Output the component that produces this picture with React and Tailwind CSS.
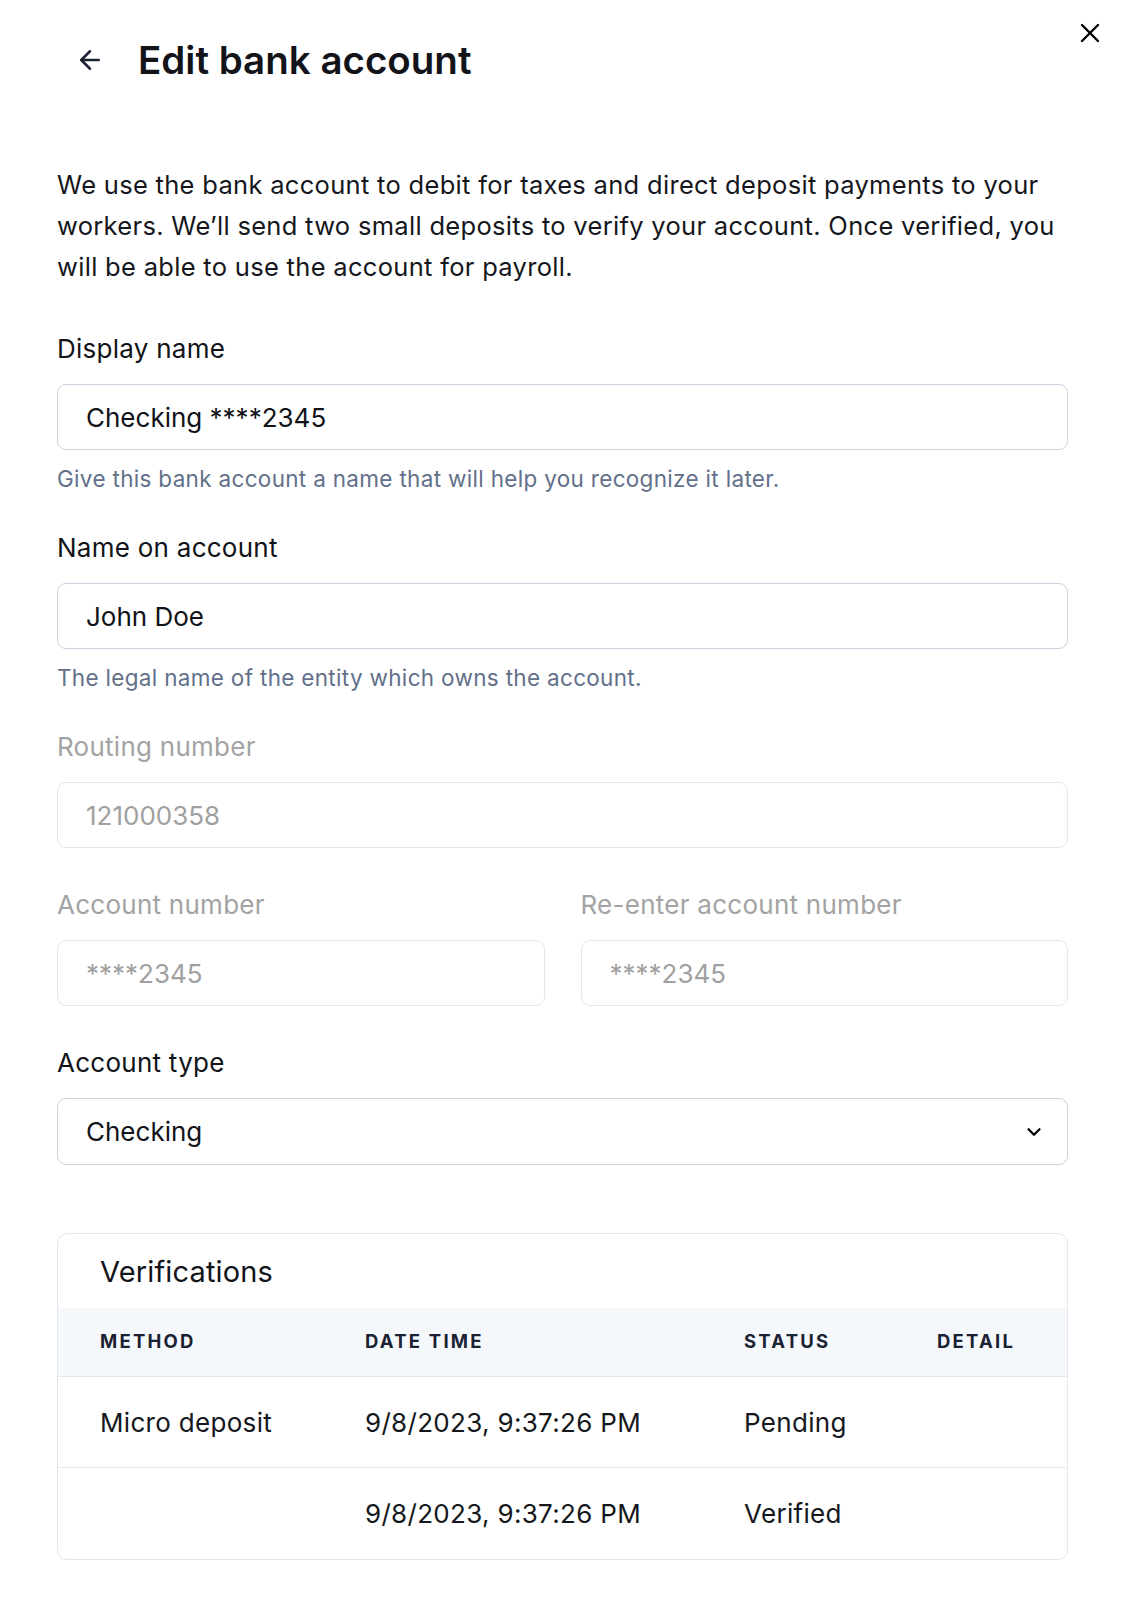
import { ArrowLeft, X, ChevronDown } from "lucide-react";

const ROWS = [
  { method: "Micro deposit", date: "9/8/2023, 9:37:26 PM", status: "Pending" },
  { method: "", date: "9/8/2023, 9:37:26 PM", status: "Verified" },
];

function Field({ label, value, hint, disabled, className = "" }) {
  return (
    <div className={className}>
      <label
        className={`block text-[26px] leading-[34px] tracking-[0.01em] ${
          disabled ? "text-[#a3a3a3]" : "text-[#111318]"
        }`}
      >
        {label}
      </label>
      <div
        className={`mt-[18px] h-[66px] rounded-[9px] border px-[28px] flex items-center text-[26px] ${
          disabled
            ? "border-[#e3e8ef] text-[#a0a0a0]"
            : "border-[#c9d3e0] text-[#111318]"
        }`}
      >
        {value}
      </div>
      {hint && (
        <p className="mt-[14px] text-[22.5px] leading-[30px] tracking-[0.014em] text-[#62708a]">
          {hint}
        </p>
      )}
    </div>
  );
}

export default function App() {
  return (
    <div
      className="relative min-h-screen bg-white px-[57px] pt-[38px] pb-[40px]"
      style={{ fontFamily: "Inter, 'Noto Sans', sans-serif" }}
    >
      <button className="absolute right-[23px] top-[17px] text-black">
        <X size={32} strokeWidth={1.8} />
      </button>

      <div className="flex items-center h-[44px]">
        <ArrowLeft size={30} strokeWidth={2} className="ml-[18px] text-[#1b2333]" />
        <h1 className="ml-[33px] text-[38.5px] leading-[44px] font-semibold text-[#12141a]">
          Edit bank account
        </h1>
      </div>

      <p className="mt-[82px] text-[25.5px] leading-[41px] tracking-[0.012em] text-[#15171c] w-[1011px]">
        We use the bank account to debit for taxes and direct deposit payments
        to your workers. We’ll send two small deposits to verify your account.
        Once verified, you will be able to use the account for payroll.
      </p>

      <div className="w-[1011px]">
        <Field
          className="mt-[45px]"
          label="Display name"
          value="Checking ****2345"
          hint="Give this bank account a name that will help you recognize it later."
        />
        <Field
          className="mt-[37px]"
          label="Name on account"
          value="John Doe"
          hint="The legal name of the entity which owns the account."
        />
        <Field
          className="mt-[37px]"
          label="Routing number"
          value="121000358"
          disabled
        />
        <div className="mt-[40px] grid grid-cols-2 gap-[36px]">
          <Field label="Account number" value="****2345" disabled />
          <Field label="Re-enter account number" value="****2345" disabled />
        </div>

        <div className="mt-[40px]">
          <label className="block text-[26px] leading-[34px] tracking-[0.01em] text-[#111318]">
            Account type
          </label>
          <div className="mt-[18px] h-[67px] rounded-[9px] border border-[#c9d3e0] pl-[28px] pr-[22px] flex items-center justify-between text-[26px] text-[#111318]">
            <span>Checking</span>
            <ChevronDown size={22} strokeWidth={2.5} className="text-black" />
          </div>
        </div>

        <div className="mt-[68px] rounded-[10px] border border-[#e3e8ef] overflow-hidden">
          <h2 className="px-[42px] pt-[20px] pb-[18px] text-[29px] leading-[36px] tracking-[0.005em] text-[#12141a]">
            Verifications
          </h2>
          <div className="grid grid-cols-[265px_379px_193px_1fr] px-[42px] h-[69px] items-center bg-[#f5f8fb] border-b border-[#e3e8ef] text-[18.5px] font-bold tracking-[0.12em] text-[#1b2333]">
            <span>METHOD</span>
            <span>DATE TIME</span>
            <span>STATUS</span>
            <span>DETAIL</span>
          </div>
          {ROWS.map((r, i) => (
            <div
              key={i}
              className={`grid grid-cols-[265px_379px_193px_1fr] px-[42px] h-[91px] items-center text-[26px] tracking-[0.012em] text-[#15171c] ${
                i < ROWS.length - 1 ? "border-b border-[#e3e8ef]" : ""
              }`}
            >
              <span>{r.method}</span>
              <span>{r.date}</span>
              <span>{r.status}</span>
              <span></span>
            </div>
          ))}
        </div>
      </div>
    </div>
  );
}
